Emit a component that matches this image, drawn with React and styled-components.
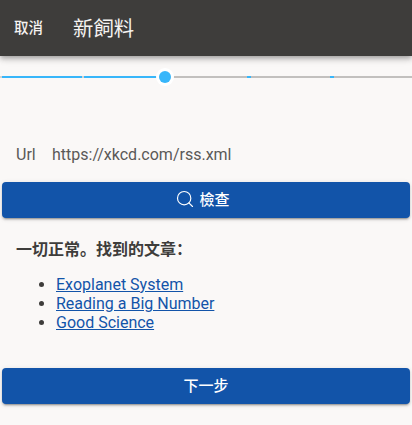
import React from 'react';
import styled, { createGlobalStyle } from 'styled-components';
import { Search } from 'lucide-react';

const GlobalStyle = createGlobalStyle`
  html, body {
    margin: 0;
    padding: 0;
    background: #faf8f7;
  }
  body {
    font-family: Roboto, "Noto Sans CJK SC", sans-serif;
    color: #3e3d3b;
  }
`

const ticks = [
  { x: 0, w: 2, on: false },
  { x: 82, w: 2, on: false },
  { x: 247, w: 4, on: true },
  { x: 330, w: 4, on: true },
];

function App() {
  return (
    <Page>
      <GlobalStyle />
      <Header>
        <CancelButton>取消</CancelButton>
        <Title>新飼料</Title>
      </Header>
      <Stepper>
        <Track />
        <TrackFill style={{ width: 165 }} />
        {ticks.map((t) => (
          <Tick key={t.x} $on={t.on} style={{ left: t.x, width: t.w }} />
        ))}
        <Thumb />
      </Stepper>
      <UrlRow>
        <UrlLabel>Url</UrlLabel>
        <UrlValue>https://xkcd.com/rss.xml</UrlValue>
      </UrlRow>
      <PrimaryButton $shift={7}>
        <Search size={20} strokeWidth={1.4} />
        檢查
      </PrimaryButton>
      <Result>一切正常。找到的文章：</Result>
      <ArticleList>
        <li><a href="#1">Exoplanet System</a></li>
        <li><a href="#2">Reading a Big Number</a></li>
        <li><a href="#3">Good Science</a></li>
      </ArticleList>
      <PrimaryButton>下一步</PrimaryButton>
    </Page>
  );
}

export default App;

const Page = styled.div`
  width: 412px;
  height: 425px;
  overflow: hidden;
  background: #faf8f7;
`

const Header = styled.header`
  height: 56px;
  display: flex;
  align-items: center;
  background: #3e3d3b;
  color: #f5f3f1;
  box-shadow: 0 2px 4px -1px rgba(0, 0, 0, 0.2), 0 4px 5px 0 rgba(0, 0, 0, 0.14), 0 1px 10px 0 rgba(0, 0, 0, 0.12);
`

const CancelButton = styled.button`
  width: 57px;
  margin: 0 0 3px;
  padding: 0;
  border: 0;
  background: none;
  color: inherit;
  font-family: inherit;
  font-size: 14.5px;
  font-weight: 500;
`

const Title = styled.h1`
  margin: 0 0 2px 16px;
  font-size: 20.4px;
  font-weight: 400;
`

const Stepper = styled.div`
  position: relative;
  height: 42px;
`

const Track = styled.div`
  position: absolute;
  left: 0;
  right: 0;
  top: 20px;
  height: 2px;
  background: #c2c0be;
`

const TrackFill = styled.div`
  position: absolute;
  left: 0;
  top: 20px;
  height: 2px;
  background: #38b6fa;
`

const Tick = styled.div`
  position: absolute;
  top: 20px;
  height: 2px;
  background: ${(props) => (props.$on ? '#38b6fa' : '#d5d3d1')};
`

const Thumb = styled.div`
  position: absolute;
  left: 159px;
  top: 15px;
  width: 12px;
  height: 12px;
  border-radius: 50%;
  background: #38b6fa;
  box-shadow: 0 0 0 3px #fff;
`

const UrlRow = styled.div`
  display: flex;
  align-items: center;
  height: 36px;
  margin-top: 38px;
  padding: 0 16px;
  font-size: 16px;
  color: #5a5957;
`

const UrlLabel = styled.span`
  width: 36px;
`

const UrlValue = styled.span`
  flex: 1;
`

const PrimaryButton = styled.button`
  display: flex;
  align-items: center;
  justify-content: center;
  gap: 4px;
  width: 408px;
  height: 36px;
  margin: 10px 2px 0;
  padding: 0 ${(props) => props.$shift || 0}px 3px 0;
  border: 0;
  border-radius: 4px;
  background: #1254a9;
  color: #fff;
  font-family: inherit;
  font-size: 15px;
  font-weight: 500;
  box-shadow: 0 3px 1px -2px rgba(0, 0, 0, 0.2), 0 2px 2px 0 rgba(0, 0, 0, 0.14), 0 1px 5px 0 rgba(0, 0, 0, 0.12);
`

const Result = styled.p`
  margin: 22px 16px 0;
  font-size: 16px;
  font-weight: 700;
  line-height: 20px;
`

const ArticleList = styled.ul`
  margin: 15px 0 36px;
  padding: 0 0 0 56px;
  font-size: 16px;
  line-height: 19px;

  a {
    color: #1254a9;
  }
`
